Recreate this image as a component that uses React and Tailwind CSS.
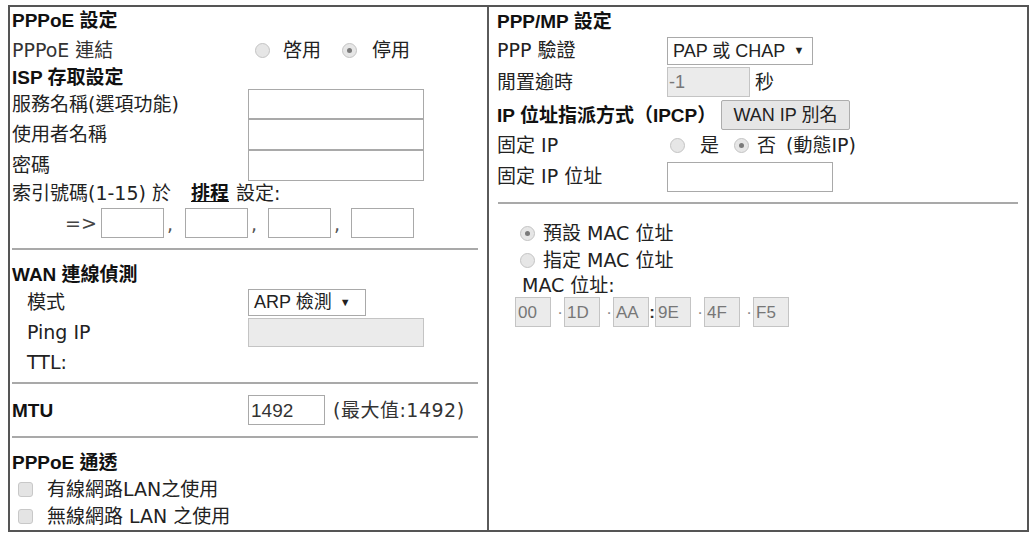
import React from "react";

function Radio({ checked, className = "" }) {
  return (
    <span
      className={`inline-flex shrink-0 w-[15px] h-[15px] rounded-full border border-[#c4c4c4] bg-[#e6e6e6] items-center justify-center ${className}`}
    >
      {checked && <span className="w-[5px] h-[5px] rounded-full bg-[#7a7a7a]" />}
    </span>
  );
}

function Check() {
  return (
    <span className="inline-block shrink-0 w-[15px] h-[15px] rounded-[3px] border border-[#c8c8c8] bg-[#e4e4e4]" />
  );
}

function Hr({ className = "" }) {
  return <div className={`h-[2px] bg-[#a9a9a9] ${className}`} />;
}

const H = "font-['Liberation_Sans','Noto_Sans_CJK_TC',sans-serif] font-bold text-[#111]";

export default function App() {
  return (
    <div className="w-[1031px] h-[534px] bg-white overflow-hidden font-['DejaVu_Sans','Noto_Sans_CJK_TC',sans-serif] text-[19px] leading-none text-[#222]">
      <div className="ml-[8px] mt-[5px] w-[1021px] h-[527px] border-2 border-[#555] flex">
        {/* LEFT PANEL */}
        <div className="w-[479px] shrink-0 border-r-2 border-[#5a5a5a] pl-[2px] flex flex-col">
          <div className={`h-[27px] flex items-center ${H}`}>PPPoE 設定</div>
          <div className="h-[32px] flex items-center">
            <div className="w-[236px] shrink-0 text-[#333]">PPPoE 連結</div>
            <Radio className="ml-[7px]" />
            <span className="ml-[13px]">啓用</span>
            <Radio className="ml-[21px]" checked />
            <span className="ml-[15px]">停用</span>
          </div>
          <div className={`h-[23px] flex items-center ${H}`}>ISP 存取設定</div>
          <div className="h-[30px] flex items-center">
            <div className="w-[236px] shrink-0">服務名稱(選項功能)</div>
            <div className="w-[176px] h-full border border-[#a9a9a9] bg-white" />
          </div>
          <div className="h-[31px] flex items-center">
            <div className="w-[236px] shrink-0">使用者名稱</div>
            <div className="w-[176px] h-full border border-[#a9a9a9] bg-white" />
          </div>
          <div className="h-[31px] flex items-center">
            <div className="w-[236px] shrink-0">密碼</div>
            <div className="w-[176px] h-full border border-[#a9a9a9] bg-white" />
          </div>
          <div className="h-[25px] flex items-center whitespace-nowrap">
            <span>索引號碼(1-15)</span>
            <span className="ml-[6px]">於</span>
            <span className="ml-[20px] font-bold underline text-[#111]">排程</span>
            <span className="ml-[7px]">設定:</span>
          </div>
          <div className="h-[34px] flex items-center">
            <span className="ml-[53px] w-[36px] shrink-0 text-[#444]">=&gt;</span>
            <div className="w-[63px] h-[30px] border border-[#a9a9a9] bg-white" />
            <span className="w-[21px] pl-[3px] self-end pb-[6px] text-[#555]">,</span>
            <div className="w-[63px] h-[30px] border border-[#a9a9a9] bg-white" />
            <span className="w-[20px] pl-[3px] self-end pb-[6px] text-[#555]">,</span>
            <div className="w-[63px] h-[30px] border border-[#a9a9a9] bg-white" />
            <span className="w-[20px] pl-[3px] self-end pb-[6px] text-[#555]">,</span>
            <div className="w-[63px] h-[30px] border border-[#a9a9a9] bg-white" />
          </div>
          <div className="pt-[8px] pb-[11px] mr-[9px]">
            <Hr />
          </div>
          <div className={`h-[27px] flex items-center ${H}`}>WAN 連線偵測</div>
          <div className="h-[28px] flex items-center">
            <div className="w-[236px] shrink-0 pl-[15px]">模式</div>
            <div className="w-[118px] h-[27px] flex items-center border border-[#a9a9a9] bg-white pl-[5px] font-['Liberation_Sans','Noto_Sans_CJK_TC',sans-serif] text-[18px] text-[#222]">
              ARP 檢測<span className="ml-[8px] text-[11px]">▼</span>
            </div>
          </div>
          <div className="h-[32px] flex items-center">
            <div className="w-[236px] shrink-0 pl-[15px]">Ping IP</div>
            <div className="w-[176px] h-[29px] border border-[#c4c4c4] bg-[#ebebeb]" />
          </div>
          <div className="h-[28px] flex items-center">
            <div className="pl-[15px]">TTL:</div>
          </div>
          <div className="pt-[6px] pb-[11px] mr-[9px]">
            <Hr />
          </div>
          <div className="h-[30px] flex items-center">
            <div className={`w-[236px] shrink-0 ${H}`}>MTU</div>
            <div className="w-[77px] h-[30px] flex items-center border border-[#a9a9a9] bg-white pl-[2px] font-['Liberation_Sans',sans-serif] text-[19px] text-[#333]">
              1492
            </div>
            <span className="ml-[8px] text-[#333] tracking-[0.5px]">(最大值:1492)</span>
          </div>
          <div className="pt-[11px] pb-[11px] mr-[9px]">
            <Hr />
          </div>
          <div className={`h-[27px] flex items-center ${H}`}>PPPoE 通透</div>
          <div className="h-[27px] flex items-center pl-[6px]">
            <Check />
            <span className="ml-[14px]">有線網路LAN之使用</span>
          </div>
          <div className="h-[27px] flex items-center pl-[6px]">
            <Check />
            <span className="ml-[14px]">無線網路 LAN 之使用</span>
          </div>
        </div>

        {/* RIGHT PANEL */}
        <div className="flex-1 pl-[8px] flex flex-col">
          <div className={`h-[29px] flex items-center ${H}`}>PPP/MP 設定</div>
          <div className="h-[29px] flex items-center">
            <div className="w-[170px] shrink-0">PPP 驗證</div>
            <div className="w-[146px] h-[28px] flex items-center border border-[#a9a9a9] bg-white pl-[5px] font-['Liberation_Sans','Noto_Sans_CJK_TC',sans-serif] text-[18px] text-[#222]">
              PAP 或 CHAP<span className="ml-[8px] text-[11px]">▼</span>
            </div>
          </div>
          <div className="h-[34px] flex items-center">
            <div className="w-[170px] shrink-0">閒置逾時</div>
            <div className="w-[83px] h-[30px] flex items-center border border-[#c4c4c4] bg-[#ebebeb] pl-[1px] font-['Liberation_Sans',sans-serif] text-[18px] text-[#777]">
              -1
            </div>
            <span className="ml-[5px]">秒</span>
          </div>
          <div className="h-[32px] flex items-center">
            <div className={`w-[224px] shrink-0 whitespace-nowrap ${H}`}>IP 位址指派方式（IPCP）</div>
            <div className="w-[129px] h-[30px] flex items-center justify-center border border-[#adadad] bg-[#e6e6e6] rounded-[2px] font-['Liberation_Sans','Noto_Sans_CJK_TC',sans-serif] text-[18px] text-[#222]">
              WAN IP 別名
            </div>
          </div>
          <div className="h-[29px] flex items-center">
            <div className="w-[170px] shrink-0">固定 IP</div>
            <Radio className="ml-[3px]" />
            <span className="ml-[15px]">是</span>
            <Radio className="ml-[15px]" checked />
            <span className="ml-[8px]">否</span>
            <span className="ml-[10px] whitespace-nowrap">(動態IP)</span>
          </div>
          <div className="h-[33px] flex items-center">
            <div className="w-[170px] shrink-0">固定 IP 位址</div>
            <div className="w-[166px] h-[30px] border border-[#a9a9a9] bg-white" />
          </div>
          <div className="pt-[9px] pb-[15px] ml-[1px] mr-[9px]">
            <Hr />
          </div>
          <div className="h-[28px] flex items-center pl-[23px]">
            <Radio checked />
            <span className="ml-[8px]">預設 MAC 位址</span>
          </div>
          <div className="h-[27px] flex items-center pl-[23px]">
            <Radio />
            <span className="ml-[8px]">指定 MAC 位址</span>
          </div>
          <div className="h-[23px] flex items-center pl-[25px]">MAC 位址:</div>
          <div className="h-[30px] flex items-center pl-[18px] font-['Liberation_Sans',sans-serif] text-[17px] text-[#777]">
            <div className="w-[36px] h-[30px] flex items-center pl-[2px] border border-[#c4c4c4] bg-[#ebebeb]">00</div>
            <span className="w-[13px] text-right pr-[1px] text-[#888]">·</span>
            <div className="w-[36px] h-[30px] flex items-center pl-[2px] border border-[#c4c4c4] bg-[#ebebeb]">1D</div>
            <span className="w-[13px] text-right pr-[1px] text-[#888]">·</span>
            <div className="w-[36px] h-[30px] flex items-center pl-[2px] border border-[#c4c4c4] bg-[#ebebeb]">AA</div>
            <span className="w-[6px] text-center font-bold text-[#333]">:</span>
            <div className="w-[36px] h-[30px] flex items-center pl-[2px] border border-[#c4c4c4] bg-[#ebebeb]">9E</div>
            <span className="w-[13px] text-right pr-[1px] text-[#888]">·</span>
            <div className="w-[36px] h-[30px] flex items-center pl-[2px] border border-[#c4c4c4] bg-[#ebebeb]">4F</div>
            <span className="w-[13px] text-right pr-[1px] text-[#888]">·</span>
            <div className="w-[36px] h-[30px] flex items-center pl-[2px] border border-[#c4c4c4] bg-[#ebebeb]">F5</div>
          </div>
        </div>
      </div>
    </div>
  );
}
